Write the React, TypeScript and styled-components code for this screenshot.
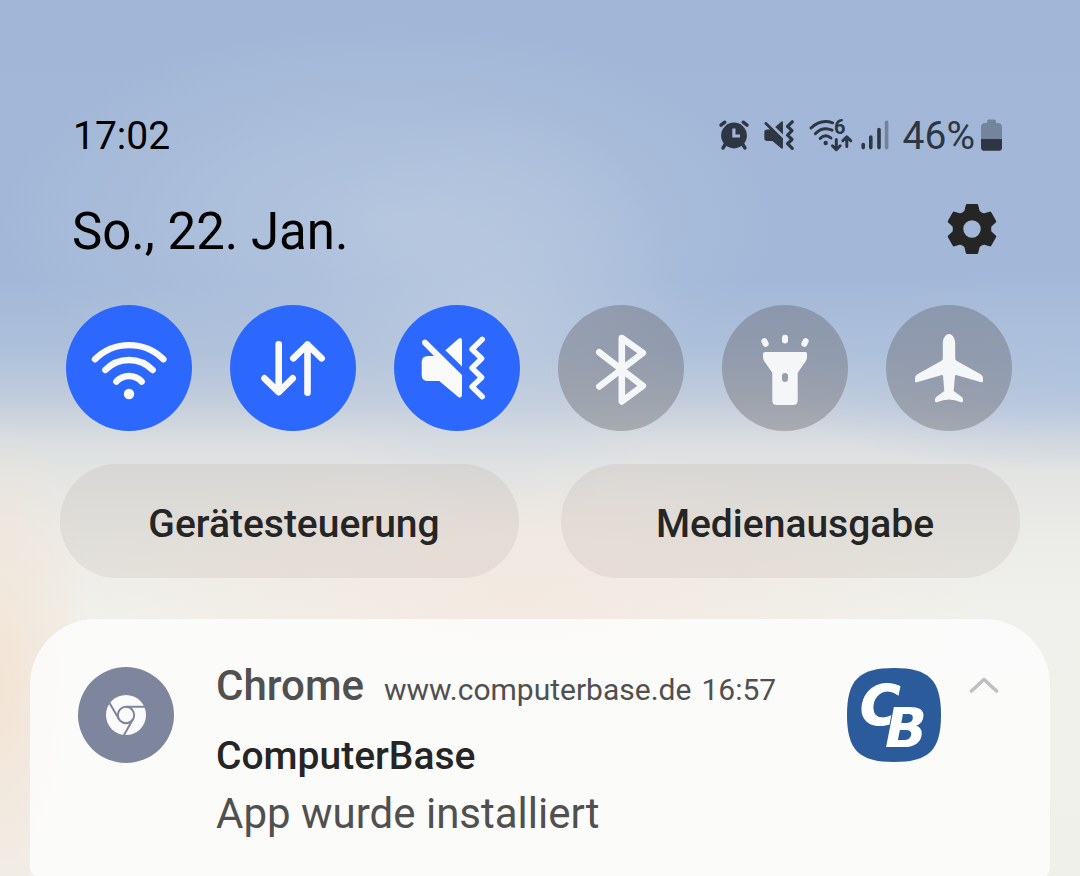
import React from "react";
import styled, { createGlobalStyle } from "styled-components";

const GlobalStyle = createGlobalStyle`
  * { box-sizing: border-box; }
  body { margin: 0; font-family: Roboto, "Noto Sans", sans-serif; color: #252525; }
  h1, h2, p { margin: 0; font-weight: 400; }
  button { border: 0; padding: 0; background: none; font: inherit; color: inherit; cursor: pointer; }
  svg { display: block; flex: none; overflow: visible; }
`;

const Shade = styled.main`
  min-height: 100vh;
  padding: 112px 30px 0;
  background:
    radial-gradient(ellipse 36% 22% at 36% 25%, rgba(190, 205, 226, 0.6), rgba(190, 205, 226, 0) 100%),
    radial-gradient(ellipse 18% 24% at 46% 36%, rgba(198, 210, 226, 0.5), rgba(198, 210, 226, 0) 100%),
    radial-gradient(ellipse 30% 12% at 100% 42%, rgba(172, 192, 222, 0.7), rgba(172, 192, 222, 0) 100%),
    radial-gradient(ellipse 9% 30% at 0% 78%, rgba(243, 226, 210, 0.9), rgba(243, 226, 210, 0) 100%),
    radial-gradient(ellipse 42% 17% at 48% 68%, rgba(244, 231, 222, 0.8), rgba(244, 231, 222, 0) 100%),
    linear-gradient(180deg, #a2b7d7 0%, #a3b8d8 32%, #aec0da 40%, #c4cedc 46%, #dadde0 50%, #e4e5e3 54%, #ecece8 62%, #f0f1ec 70%, #f0f0eb 100%);
`;

const StatusBar = styled.header`
  display: flex;
  align-items: center;
  justify-content: space-between;
  height: 48px;
  padding: 0 47px 0 43px;
  font-size: 39px;
  line-height: 48px;
`;

const Clock = styled.time`
  color: #000;
`;

const StatusIcons = styled.div`
  display: flex;
  align-items: center;
  color: #2d3642;
`;

const StatusIcon = styled.svg<{ $gap?: number }>`
  margin-right: ${(p) => p.$gap ?? 0}px;
`;

const Battery = styled.span`
  margin-right: 6px;
`;

const DateRow = styled.div`
  display: flex;
  align-items: flex-start;
  justify-content: space-between;
  margin-top: 42px;
  padding: 0 51px 0 42px;
`;

const DateText = styled.h1`
  color: #000;
  font-size: 51px;
  line-height: 60px;
`;

const Tiles = styled.section`
  display: flex;
  justify-content: space-between;
  margin-top: 43px;
  padding: 0 38px 0 36px;
`;

const Tile = styled.button<{ $on?: boolean }>`
  width: 126px;
  height: 126px;
  border-radius: 50%;
  background: ${(p) => (p.$on ? "#2d68fe" : "rgba(88, 86, 88, 0.35)")};
  color: ${(p) => (p.$on ? "#fafafa" : "#f5f6f8")};
`;

const Pills = styled.section`
  display: flex;
  gap: 42px;
  margin-top: 33px;
  padding: 0 30px;
`;

const Pill = styled.button`
  flex: 1;
  height: 114px;
  padding: 5px 0 0 9px;
  border-radius: 57px;
  background: rgba(80, 60, 40, 0.07);
  font-size: 39px;
  font-weight: 500;
  line-height: 48px;
`;

const Card = styled.article`
  display: flex;
  align-items: flex-start;
  margin-top: 41px;
  padding: 42px 50px 40px 48px;
  border-radius: 66px 66px 12px 12px;
  background: rgba(253, 253, 253, 0.86);
`;

const AppIcon = styled.svg`
  margin: 6px 42px 0 0;
`;

const Content = styled.div`
  flex: 1;
  min-width: 0;
`;

const SourceLine = styled.div`
  display: flex;
  align-items: baseline;
  color: #505050;
  font-size: 30px;
  line-height: 50px;
  white-space: nowrap;
`;

const AppName = styled.span`
  margin-right: 20px;
  font-size: 42px;
  font-weight: 500;
`;

const SourceLink = styled.a`
  margin-right: 10px;
  color: inherit;
  text-decoration: none;
`;

const Title = styled.h2`
  margin-top: 16px;
  font-size: 39px;
  font-weight: 500;
  line-height: 50px;
`;

const Message = styled.p`
  margin-top: 8px;
  color: #505050;
  font-size: 42px;
  line-height: 50px;
`;

const SiteLogo = styled.svg`
  margin: 7px 27px 0 0;
`;

const Collapse = styled.button`
  margin-top: 12px;
`;

const speaker =
  "M27.7 57Q27.7 51 34 51H40L28.6 39.4Q27.2 37.4 28.6 35.6Q30.6 33.8 32.8 35.2L68 70V90Q67.6 93.6 64.6 92.2L45.3 76H34Q27.7 76 27.7 70Z";
const speakerTop = "M51.3 45.3L64.8 33.4Q67.6 32 68 35.2V61.6Z";
const zigzag = "M88.3 34.3L78 44.3L87.7 53.5L78 63L87.7 72.5L78 81.7L88.3 91.7";

const Vibrate = ({ weight = 5.4 }: { weight?: number }) => (
  <>
    <path fill="currentColor" d={speaker} />
    <path fill="currentColor" d={speakerTop} />
    <path
      d={zigzag}
      fill="none"
      stroke="currentColor"
      strokeWidth={weight}
      strokeLinecap="round"
      strokeLinejoin="round"
    />
  </>
);

const tiles = [
  {
    label: "WLAN",
    on: true,
    icon: (
      <>
        <g fill="none" stroke="currentColor" strokeWidth="6.4" strokeLinecap="round">
          <path d="M29 54.3A48.3 48.3 0 0 1 97.4 54.3" />
          <path d="M39.3 65A33 33 0 0 1 86.7 65" />
          <path d="M50.3 76.7A17 17 0 0 1 75.7 76.7" />
        </g>
        <circle cx="63" cy="89" r="5.2" fill="currentColor" />
      </>
    ),
  },
  {
    label: "Mobile Daten",
    on: true,
    icon: (
      <path
        fill="none"
        stroke="currentColor"
        strokeWidth="6.6"
        strokeLinecap="round"
        strokeLinejoin="round"
        d="M48.7 39.3V87M34.5 73.3L48.7 87.2L62.7 73.3M77.5 87.7V39.5M63.3 53.3L77.5 39.5L91.7 53.3"
      />
    ),
  },
  { label: "Vibrieren", on: true, icon: <Vibrate /> },
  {
    label: "Bluetooth",
    on: false,
    icon: (
      <path
        fill="none"
        stroke="currentColor"
        strokeWidth="6.6"
        strokeLinecap="round"
        strokeLinejoin="round"
        d="M41.3 47.3L84.8 80.8L63.8 96.4V33L84.8 48L41.3 81.5"
      />
    ),
  },
  {
    label: "Taschenlampe",
    on: false,
    icon: (
      <g fill="currentColor">
        <path
          fillRule="evenodd"
          d="M43.5 47H83.5Q85 47 85 48.5V52Q85 54.6 83.6 56.6L75.7 67.7V95.5Q75.7 100 71.2 100H54.8Q50.3 100 50.3 95.5V67.7L42.4 56.6Q41 54.6 41 52V49Q41 47 43.5 47ZM60 71V74A3 3 0 0 0 66 74V71A3 3 0 0 0 60 71Z"
        />
        <rect x="60" y="29.7" width="6" height="8.8" rx="3" />
        <rect x="40" y="33" width="6" height="9" rx="3" transform="rotate(-26 43 37.5)" />
        <rect x="80" y="33" width="6" height="9" rx="3" transform="rotate(26 83 37.5)" />
      </g>
    ),
  },
  {
    label: "Offline-Modus",
    on: false,
    icon: (
      <path
        fill="currentColor"
        d="M63 29C66.5 29 69.2 33.5 69.2 38.5V53.5Q69.2 55 70.5 55.8L94.6 69.3Q97 70.8 97 73V76Q97 77.8 95.2 77.2L71 70.2Q69 69.7 68.9 71.5L67.7 86L75.5 91.8Q77 93 77 94.6V96Q77 97.8 75 97.2Q63 91.8 51 97.2Q49 97.8 49 96V94.6Q49 93 50.5 91.8L58.3 86L57.1 71.5Q57 69.7 55 70.2L30.8 77.2Q29 77.8 29 76V73Q29 70.8 31.4 69.3L55.5 55.8Q56.8 55 56.8 53.5V38.5C56.8 33.5 59.5 29 63 29Z"
      />
    ),
  },
];

// One tooth of the settings gear, repeated every 60 degrees.
const tooth: [number, number][] = [
  [-8, -15.8],
  [-6.2, -17.4],
  [-4.8, -23.5],
  [4.8, -23.5],
  [6.2, -17.4],
  [8, -15.8],
];
const gearPath =
  "M" +
  [0, 1, 2, 3, 4, 5]
    .flatMap((n) => {
      const a = (n * Math.PI) / 3;
      return tooth.map(
        ([x, y]) => `${x * Math.cos(a) - y * Math.sin(a)} ${x * Math.sin(a) + y * Math.cos(a)}`
      );
    })
    .join("L") +
  "ZM-10.2 0A10.2 10.2 0 0 0 10.2 0A10.2 10.2 0 0 0 -10.2 0Z";

export default function App() {
  return (
    <>
      <GlobalStyle />
      <Shade>
        <StatusBar>
          <Clock dateTime="17:02">17:02</Clock>
          <StatusIcons>
            <StatusIcon $gap={15} width="30" height="32" viewBox="0 0 30 32" aria-hidden="true">
              <path
                fill="none"
                stroke="currentColor"
                strokeWidth="3.4"
                strokeLinecap="round"
                d="M2 5.2L5.8 2.2M28 5.2L24.2 2.2M6.5 24L4 28M23.5 24L26 28"
              />
              <path
                fill="currentColor"
                fillRule="evenodd"
                d="M15 2.6A12.9 12.9 0 1 1 15 28.4A12.9 12.9 0 1 1 15 2.6ZM13.3 8.4V17.4H21V14.4H16.5V8.4Z"
              />
            </StatusIcon>
            <StatusIcon $gap={15} width="30" height="32" viewBox="27 32 65 66" aria-hidden="true">
              <Vibrate weight={7} />
            </StatusIcon>
            <StatusIcon $gap={9} width="43" height="34" viewBox="0 0 43 34" aria-hidden="true">
              <g fill="none" stroke="currentColor" strokeWidth="3" strokeLinecap="round" strokeLinejoin="round">
                <path d="M2 9C8.5 2.8 16.5 1.2 23.6 3.8" />
                <path d="M6.4 14.6C11.2 9.8 17.4 8.8 23 11.2" />
                <path d="M11.2 19.4C14.8 16 18.6 16 22 19" />
                <path d="M27.3 20.4V30.4M23.4 26.8L27.3 30.6L31.2 26.8M37.8 27.4V18M33.8 21.8L37.8 17.8L41.8 21.8" />
              </g>
              <circle cx="16.7" cy="24" r="2.2" fill="currentColor" />
              <text x="25" y="15" fontSize="20" fontWeight="700" fill="currentColor">
                6
              </text>
            </StatusIcon>
            <StatusIcon $gap={14} width="28" height="32" viewBox="0 0 28 32" aria-hidden="true">
              <g stroke="currentColor" strokeWidth="3.6" strokeLinecap="round">
                <path d="M2.2 24.5V27.6M9.8 17V27.6M18 9.5V27.6" />
                <path d="M25.6 2.4V27.6" opacity="0.4" />
              </g>
            </StatusIcon>
            <Battery>46%</Battery>
            <StatusIcon width="22" height="34" viewBox="0 0 22 34" aria-hidden="true">
              <path
                fill="currentColor"
                opacity="0.4"
                d="M6 4V2.6Q6 .6 8 .6H13Q15 .6 15 2.6V4H17.5Q21 4.5 21 8V20H0V8Q0 4.5 3.5 4Z"
              />
              <path fill="currentColor" d="M0 20H21V28.4Q21 31.8 17.5 31.8H3.5Q0 31.8 0 28.4Z" />
            </StatusIcon>
          </StatusIcons>
        </StatusBar>

        <DateRow>
          <DateText>So., 22. Jan.</DateText>
          <button type="button" aria-label="Einstellungen">
            <svg width="54" height="54" viewBox="-27 -27 54 54">
              <path
                d={gearPath}
                fill="currentColor"
                fillRule="evenodd"
                stroke="currentColor"
                strokeWidth="3"
                strokeLinejoin="round"
              />
            </svg>
          </button>
        </DateRow>

        <Tiles>
          {tiles.map((t) => (
            <Tile key={t.label} type="button" $on={t.on} aria-label={t.label} aria-pressed={t.on}>
              <svg width="126" height="126" viewBox="0 0 126 126">
                {t.icon}
              </svg>
            </Tile>
          ))}
        </Tiles>

        <Pills>
          <Pill type="button">Gerätesteuerung</Pill>
          <Pill type="button">Medienausgabe</Pill>
        </Pills>

        <Card>
          <AppIcon width="96" height="96" viewBox="0 0 96 96" aria-hidden="true">
            <circle cx="48" cy="48" r="48" fill="#7e869e" />
            <circle cx="48" cy="48" r="20" fill="#fbfbfb" />
            <g fill="none" stroke="#7e869e" strokeWidth="2">
              <circle cx="48" cy="48" r="8.2" />
              <path d="M48 39.8H67.5M40.9 52.1L31.5 36M55.1 52.1L46 68" />
            </g>
          </AppIcon>
          <Content>
            <SourceLine>
              <AppName>Chrome</AppName>
              <SourceLink href="#computerbase">www.computerbase.de</SourceLink>
              <time dateTime="16:57">16:57</time>
            </SourceLine>
            <Title>ComputerBase</Title>
            <Message>App wurde installiert</Message>
          </Content>
          <SiteLogo width="94" height="94" viewBox="0 0 94 94" role="img" aria-label="ComputerBase">
            <path
              fill="#2b5b9b"
              d="M47 0C82 0 94 12 94 47C94 82 82 94 47 94C12 94 0 82 0 47C0 12 12 0 47 0Z"
            />
            <g fontFamily="DejaVu Sans" fontWeight="700" fontStyle="italic" fill="#fff">
              <text x="13" y="56" fontSize="55" stroke="#fff" strokeWidth="1">
                C
              </text>
              <text x="38" y="79" fontSize="55" stroke="#2b5b9b" strokeWidth="2" paintOrder="stroke">
                B
              </text>
            </g>
          </SiteLogo>
          <Collapse type="button" aria-label="Einklappen">
            <svg width="32" height="24" viewBox="0 0 32 24">
              <path
                d="M3.5 18L16 6.5L28.5 18"
                fill="none"
                stroke="#c0c0c0"
                strokeWidth="3.6"
                strokeLinecap="round"
                strokeLinejoin="round"
              />
            </svg>
          </Collapse>
        </Card>
      </Shade>
    </>
  );
}
